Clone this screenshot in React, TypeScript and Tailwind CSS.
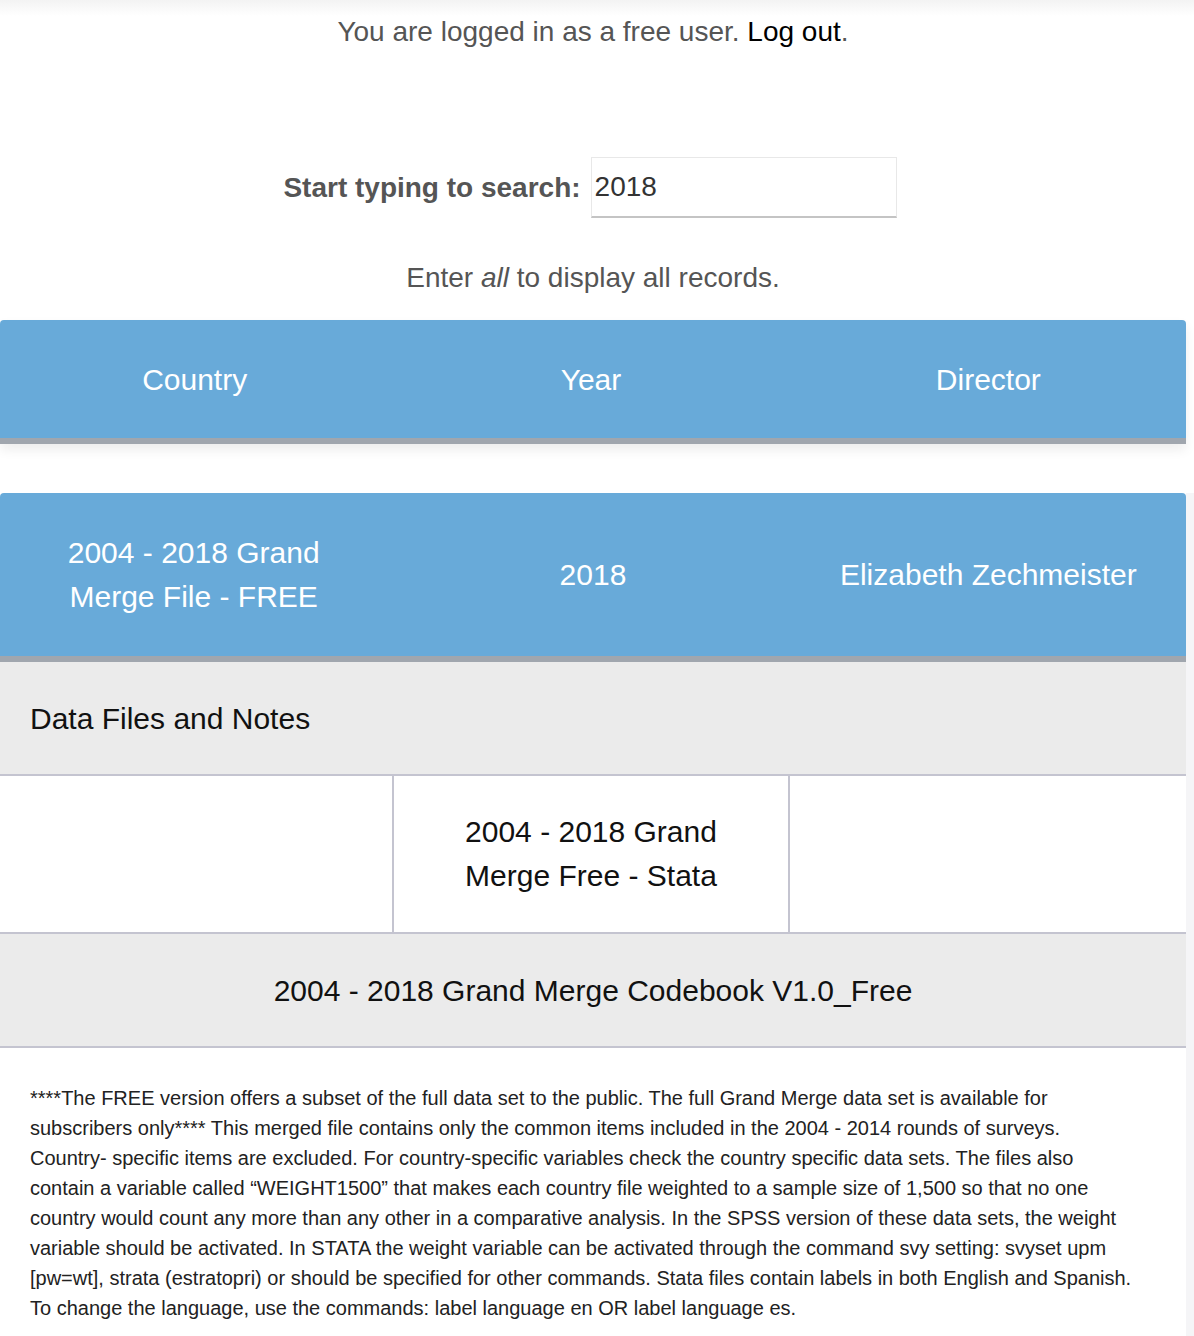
import React from "react";

const FONT = { fontFamily: '"Liberation Sans", Arial, Helvetica, sans-serif' };

type Record = {
  country: string;
  year: string;
  director: string;
  files: string[];
  codebook: string;
  notes: string[];
};

const RECORD: Record = {
  country: "2004 - 2018 Grand Merge File - FREE",
  year: "2018",
  director: "Elizabeth Zechmeister",
  files: ["", "2004 - 2018 Grand Merge Free - Stata", ""],
  codebook: "2004 - 2018 Grand Merge Codebook V1.0_Free",
  // kept as the lines the source page wraps to
  notes: [
    "****The FREE version offers a subset of the full data set to the public. The full Grand Merge data set is available for",
    "subscribers only**** This merged file contains only the common items included in the 2004 - 2014 rounds of surveys.",
    "Country- specific items are excluded. For country-specific variables check the country specific data sets. The files also",
    "contain a variable called \u201cWEIGHT1500\u201d that makes each country file weighted to a sample size of 1,500 so that no one",
    "country would count any more than any other in a comparative analysis. In the SPSS version of these data sets, the weight",
    "variable should be activated. In STATA the weight variable can be activated through the command svy setting: svyset upm",
    "[pw=wt], strata (estratopri) or should be specified for other commands. Stata files contain labels in both English and Spanish.",
    "To change the language, use the commands: label language en OR label language es.",
  ],
};

export default function App() {
  const rec = RECORD;

  return (
    <div
      className="min-h-[1336px] w-[1194px] bg-[linear-gradient(#f3f3f3,#ffffff_16px)]"
      style={FONT}
    >
      <div className="w-[1186px]">
        <p className="pt-[14px] text-center text-[28px] leading-[36px] text-[#555]">
          You are logged in as a free user. <a className="text-black">Log out</a>.
        </p>

        <div className="mt-[107px] flex items-center justify-center gap-[10px] pr-[6px]">
          <label className="text-[28px] font-bold text-[#555]">Start typing to search:</label>
          <input
            defaultValue="2018"
            className="h-[61px] w-[306px] border border-[#e8e8e8] border-b-2 border-b-[#c4c4c4] bg-white pl-[3px] text-[28px] text-[#333] outline-none"
            style={FONT}
          />
        </div>

        <p className="mt-[42px] text-center text-[28px] leading-[36px] text-[#555]">
          Enter <em>all</em> to display all records.
        </p>

        <div className="mt-[24px] rounded-t-[4px] border-b-[6px] border-[#a0a6ae] bg-[#68aad9] shadow-[0_6px_12px_rgba(0,0,0,0.07)]">
          <div className="grid h-[118px] grid-cols-3 items-center text-center text-[30px] text-white">
            <div className="pr-[6px]">Country</div>
            <div className="pr-[4px]">Year</div>
            <div>Director</div>
          </div>
        </div>
      </div>

      <div className="mt-[49px] flex">
        <div className="w-[1186px]">
          <div className="rounded-t-[4px] border-b-[6px] border-[#a0a6ae] bg-[#68aad9]">
            <div className="grid h-[163px] grid-cols-3 items-center text-center text-[30px] leading-[44px] text-white">
              <div className="pl-[30px] pr-[38px]">{rec.country}</div>
              <div className="px-[34px]">{rec.year}</div>
              <div className="px-[20px]">{rec.director}</div>
            </div>
          </div>

          <div className="flex h-[114px] items-center border-b-2 border-[#c4c4d0] bg-[#ebebeb] px-[30px] text-[30px] text-[#111]">
            Data Files and Notes
          </div>

          <div className="grid h-[158px] grid-cols-[392px_398px_396px] border-b-2 border-[#c4c4d0] bg-white">
            {rec.files.map((f, i) => (
              <div
                key={i}
                className={
                  i === 1
                    ? "flex items-center justify-center border-x-2 border-[#c4c4d0] px-[34px] text-center text-[30px] leading-[44px] text-[#111]"
                    : "flex items-center justify-center px-[34px] text-center text-[30px] leading-[44px] text-[#111]"
                }
              >
                {f}
              </div>
            ))}
          </div>

          <div className="flex h-[114px] items-center justify-center border-b-2 border-[#c4c4d0] bg-[#ebebeb] text-[30px] text-[#111]">
            {rec.codebook}
          </div>

          <p className="whitespace-nowrap px-[30px] pt-[35px] pb-[20px] text-[20px] leading-[30px] text-[#222]">
            {rec.notes.map((line, i) => (
              <React.Fragment key={i}>
                {line}
                {i < rec.notes.length - 1 && <br />}
              </React.Fragment>
            ))}
          </p>
        </div>
        <div className="w-[8px] bg-[#f5f5f7]" />
      </div>
    </div>
  );
}
